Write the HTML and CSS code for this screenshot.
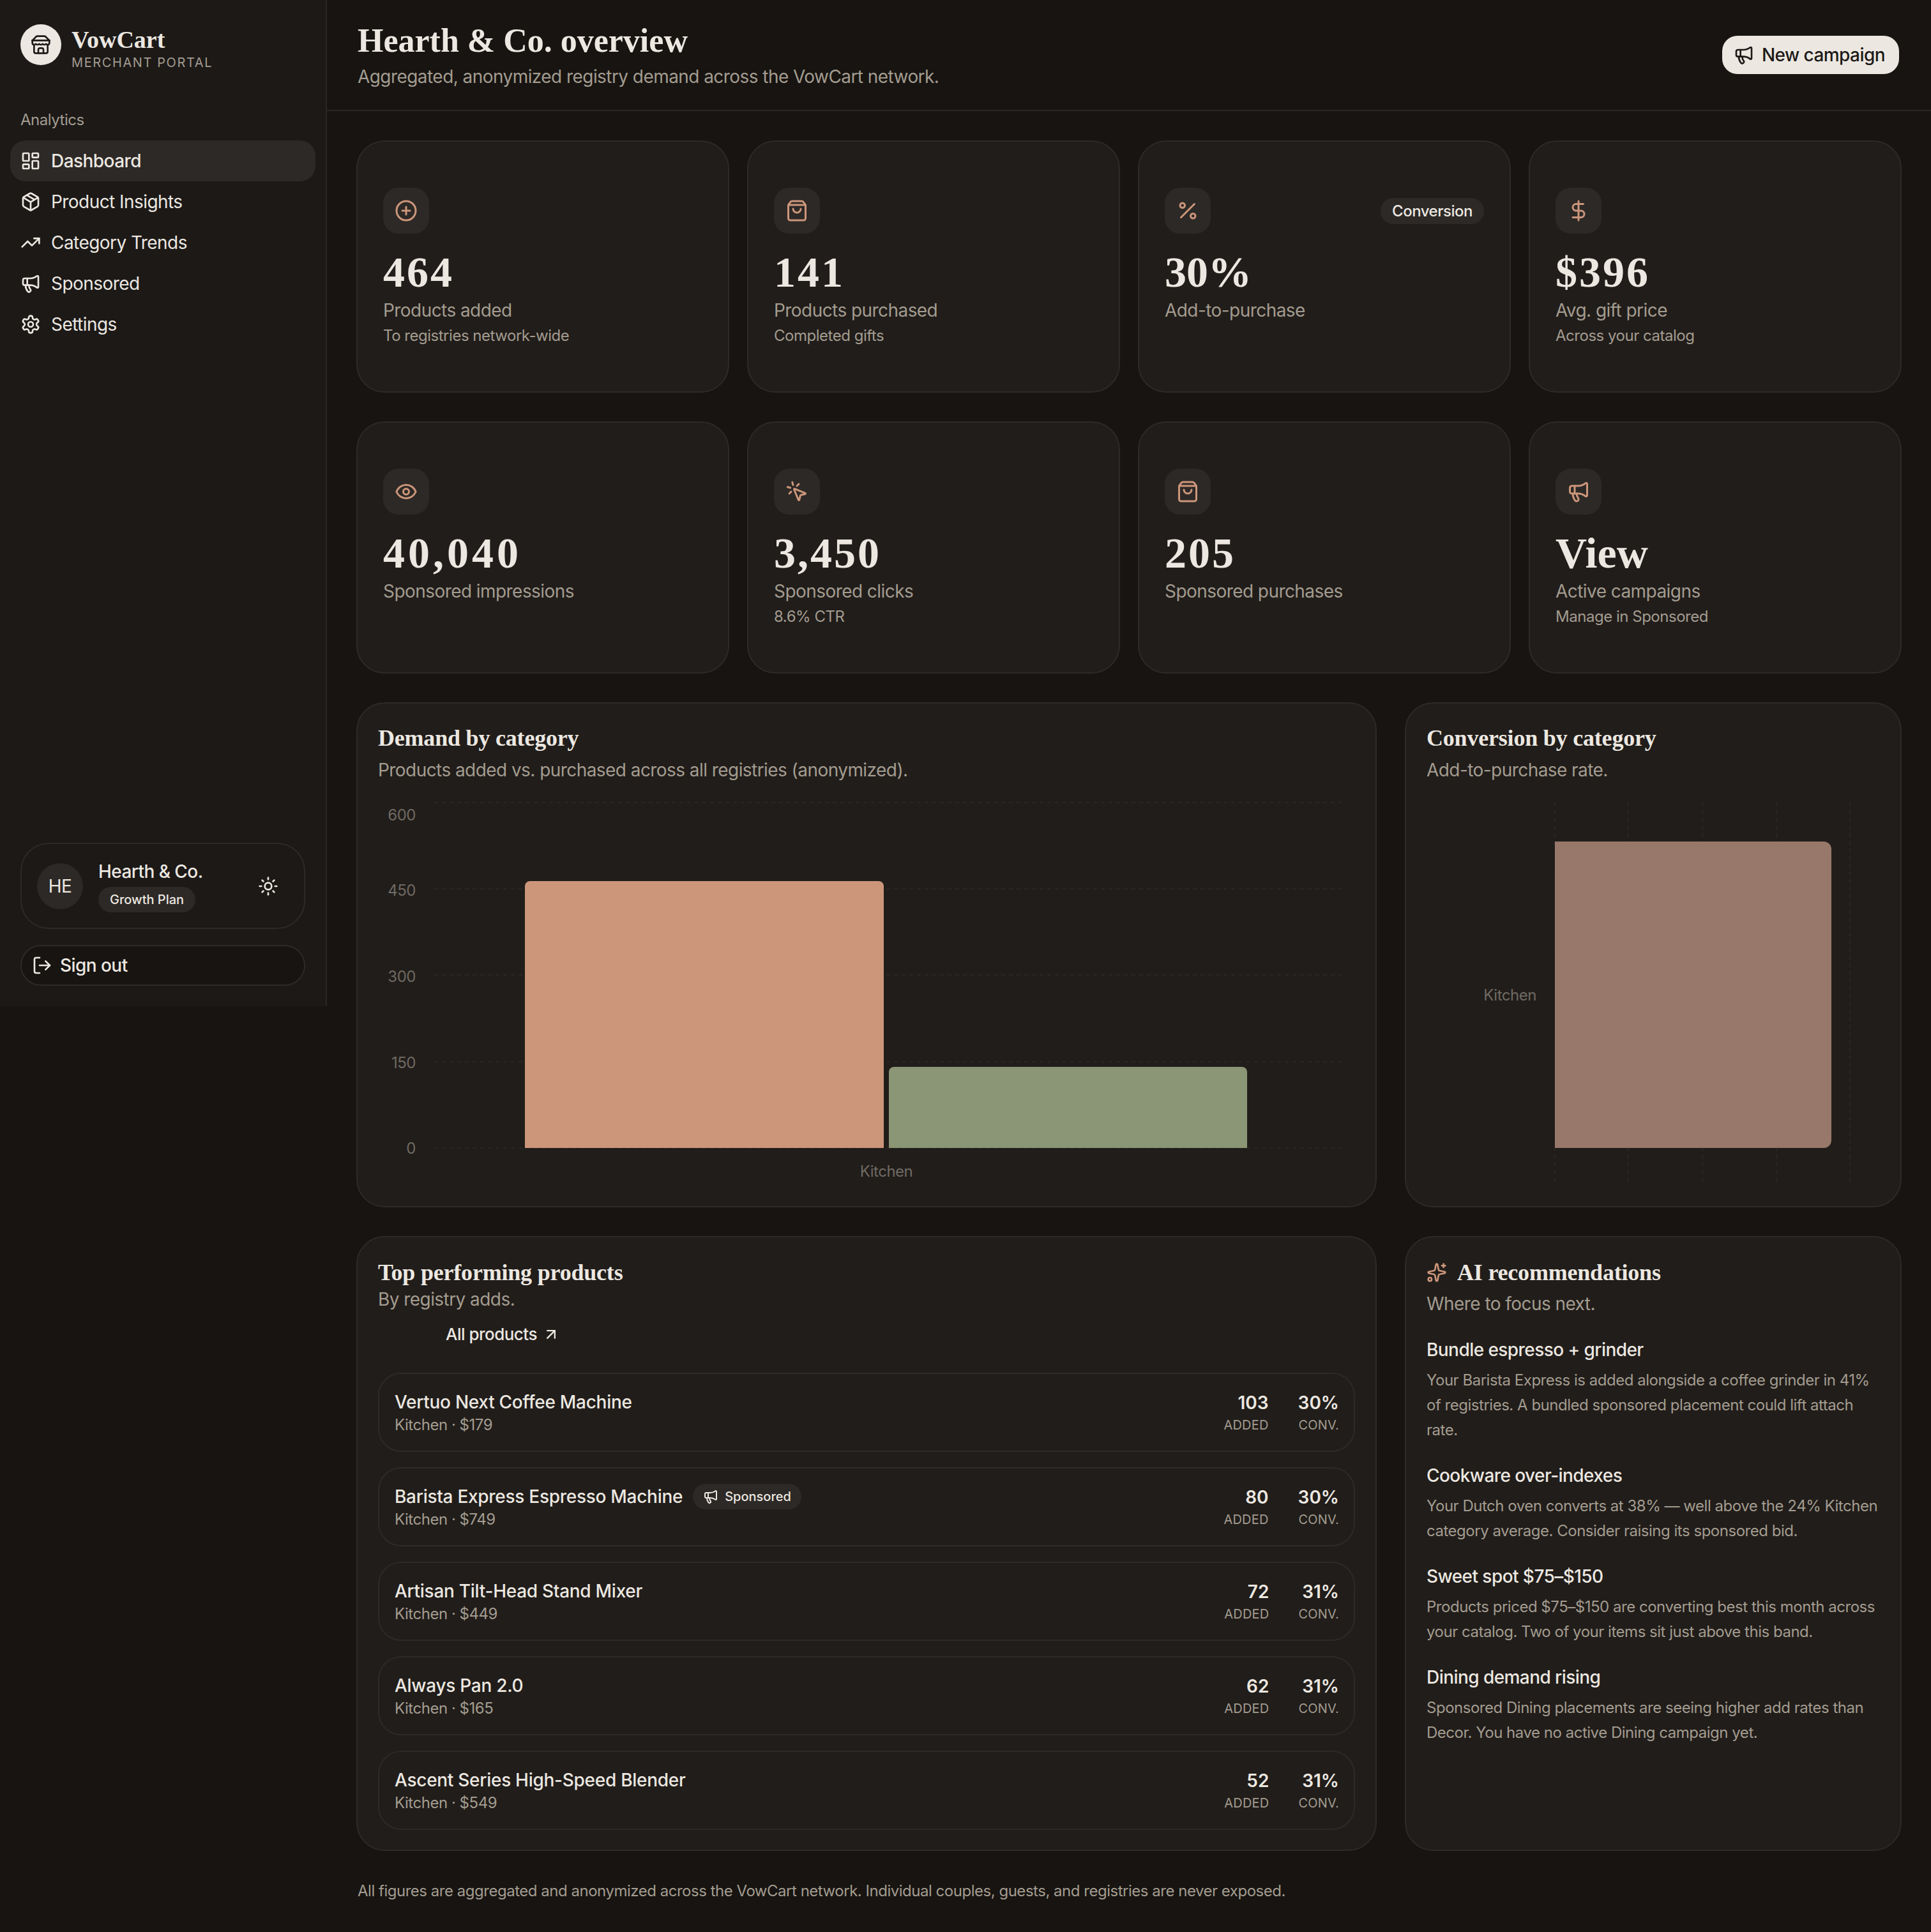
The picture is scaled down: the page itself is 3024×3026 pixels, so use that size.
FILE: index.html
```html
<!DOCTYPE html>
<html lang="en">
<head>
    <meta charset="UTF-8">
    <meta name="viewport" content="width=device-width, initial-scale=1.0">
    <title>VowCart Merchant Portal</title>
    <link rel="stylesheet" href="styles.css">
</head>
<body>
    <svg class="sprite" aria-hidden="true">
        <symbol id="i-store" viewBox="0 0 24 24"><path d="m2 7 4.41-4.41A2 2 0 0 1 7.83 2h8.34a2 2 0 0 1 1.42.59L22 7"/><path d="M4 12v8a2 2 0 0 0 2 2h12a2 2 0 0 0 2-2v-8"/><path d="M15 22v-4a2 2 0 0 0-2-2h-2a2 2 0 0 0-2 2v4"/><path d="M2 7h20"/><path d="M22 7v3a2 2 0 0 1-2 2a2.7 2.7 0 0 1-1.59-.63.7.7 0 0 0-.82 0A2.7 2.7 0 0 1 16 12a2.7 2.7 0 0 1-1.59-.63.7.7 0 0 0-.82 0A2.7 2.7 0 0 1 12 12a2.7 2.7 0 0 1-1.59-.63.7.7 0 0 0-.82 0A2.7 2.7 0 0 1 8 12a2.7 2.7 0 0 1-1.59-.63.7.7 0 0 0-.82 0A2.7 2.7 0 0 1 4 12a2 2 0 0 1-2-2V7"/></symbol>
        <symbol id="i-dashboard" viewBox="0 0 24 24"><rect x="3" y="3" width="7" height="9" rx="1"/><rect x="14" y="3" width="7" height="5" rx="1"/><rect x="14" y="12" width="7" height="9" rx="1"/><rect x="3" y="16" width="7" height="5" rx="1"/></symbol>
        <symbol id="i-package" viewBox="0 0 24 24"><path d="M11 21.73a2 2 0 0 0 2 0l7-4A2 2 0 0 0 21 16V8a2 2 0 0 0-1-1.73l-7-4a2 2 0 0 0-2 0l-7 4A2 2 0 0 0 3 8v8a2 2 0 0 0 1 1.73z"/><path d="M12 22V12"/><path d="m3.3 7 7.703 4.734a2 2 0 0 0 1.994 0L20.7 7"/><path d="m7.5 4.27 9 5.15"/></symbol>
        <symbol id="i-trending" viewBox="0 0 24 24"><path d="M16 7h6v6"/><path d="m22 7-8.5 8.5-5-5L2 17"/></symbol>
        <symbol id="i-megaphone" viewBox="0 0 24 24"><path d="M11 6a13 13 0 0 0 8.4-2.8A1 1 0 0 1 21 4v12a1 1 0 0 1-1.6.8A13 13 0 0 0 11 14H5a2 2 0 0 1-2-2V8a2 2 0 0 1 2-2z"/><path d="M6 14a12 12 0 0 0 2.4 7.2 2 2 0 0 0 3.2-2.4A8 8 0 0 1 10 14"/><path d="M8 6v8"/></symbol>
        <symbol id="i-settings" viewBox="0 0 24 24"><path d="M12.22 2h-.44a2 2 0 0 0-2 2v.18a2 2 0 0 1-1 1.73l-.43.25a2 2 0 0 1-2 0l-.15-.08a2 2 0 0 0-2.73.73l-.22.38a2 2 0 0 0 .73 2.73l.15.1a2 2 0 0 1 1 1.72v.51a2 2 0 0 1-1 1.74l-.15.09a2 2 0 0 0-.73 2.73l.22.38a2 2 0 0 0 2.73.73l.15-.08a2 2 0 0 1 2 0l.43.25a2 2 0 0 1 1 1.73V20a2 2 0 0 0 2 2h.44a2 2 0 0 0 2-2v-.18a2 2 0 0 1 1-1.73l.43-.25a2 2 0 0 1 2 0l.15.08a2 2 0 0 0 2.73-.73l.22-.39a2 2 0 0 0-.73-2.73l-.15-.08a2 2 0 0 1-1-1.74v-.5a2 2 0 0 1 1-1.74l.15-.09a2 2 0 0 0 .73-2.73l-.22-.38a2 2 0 0 0-2.73-.73l-.15.08a2 2 0 0 1-2 0l-.43-.25a2 2 0 0 1-1-1.73V4a2 2 0 0 0-2-2z"/><circle cx="12" cy="12" r="3"/></symbol>
        <symbol id="i-plus" viewBox="0 0 24 24"><circle cx="12" cy="12" r="10"/><path d="M8 12h8"/><path d="M12 8v8"/></symbol>
        <symbol id="i-bag" viewBox="0 0 24 24"><path d="M16 10a4 4 0 0 1-8 0"/><path d="M3.103 6.034h17.794"/><path d="M3.4 5.467a2 2 0 0 0-.4 1.2V20a2 2 0 0 0 2 2h14a2 2 0 0 0 2-2V6.667a2 2 0 0 0-.4-1.2l-2-2.667A2 2 0 0 0 17 2H7a2 2 0 0 0-1.6.8z"/></symbol>
        <symbol id="i-percent" viewBox="0 0 24 24"><path d="M19 5 5 19"/><circle cx="6.5" cy="6.5" r="2.5"/><circle cx="17.5" cy="17.5" r="2.5"/></symbol>
        <symbol id="i-dollar" viewBox="0 0 24 24"><path d="M12 2v20"/><path d="M17 5H9.5a3.5 3.5 0 0 0 0 7h5a3.5 3.5 0 0 1 0 7H6"/></symbol>
        <symbol id="i-eye" viewBox="0 0 24 24"><path d="M2.062 12.348a1 1 0 0 1 0-.696 10.75 10.75 0 0 1 19.876 0 1 1 0 0 1 0 .696 10.75 10.75 0 0 1-19.876 0"/><circle cx="12" cy="12" r="3"/></symbol>
        <symbol id="i-click" viewBox="0 0 24 24"><path d="M14 4.1 12 6"/><path d="m5.1 8-2.9-.8"/><path d="m6 12-1.9 2"/><path d="M7.2 2.2 8 5.1"/><path d="M9.037 9.69a.498.498 0 0 1 .653-.653l11 4.5a.5.5 0 0 1-.074.949l-4.349 1.041a1 1 0 0 0-.74.739l-1.04 4.35a.5.5 0 0 1-.95.074z"/></symbol>
        <symbol id="i-sun" viewBox="0 0 24 24"><circle cx="12" cy="12" r="4"/><path d="M12 2v2"/><path d="M12 20v2"/><path d="m4.93 4.93 1.41 1.41"/><path d="m17.66 17.66 1.41 1.41"/><path d="M2 12h2"/><path d="M20 12h2"/><path d="m6.34 17.66-1.41 1.41"/><path d="m19.07 4.93-1.41 1.41"/></symbol>
        <symbol id="i-logout" viewBox="0 0 24 24"><path d="m16 17 5-5-5-5"/><path d="M21 12H9"/><path d="M9 21H5a2 2 0 0 1-2-2V5a2 2 0 0 1 2-2h4"/></symbol>
        <symbol id="i-arrow" viewBox="0 0 24 24"><path d="M7 7h10v10"/><path d="M7 17 17 7"/></symbol>
        <symbol id="i-sparkles" viewBox="0 0 24 24"><path d="M11.017 2.814a1 1 0 0 1 1.966 0l1.051 5.558a2 2 0 0 0 1.594 1.594l5.558 1.051a1 1 0 0 1 0 1.966l-5.558 1.051a2 2 0 0 0-1.594 1.594l-1.051 5.558a1 1 0 0 1-1.966 0l-1.051-5.558a2 2 0 0 0-1.594-1.594l-5.558-1.051a1 1 0 0 1 0-1.966l5.558-1.051a2 2 0 0 0 1.594-1.594z"/><path d="M20 2v4"/><path d="M22 4h-4"/><circle cx="4" cy="20" r="2"/></symbol>
    </svg>

    <div class="app">
        <aside class="sidebar">
            <div class="brand">
                <div class="brand-logo"><svg class="icon icon-md"><use href="#i-store"/></svg></div>
                <div class="brand-text">
                    <div class="brand-name">VowCart</div>
                    <div class="brand-sub">Merchant Portal</div>
                </div>
            </div>

            <div class="nav-label">Analytics</div>
            <nav class="nav">
                <a class="nav-item active"><svg class="icon icon-md"><use href="#i-dashboard"/></svg>Dashboard</a>
                <a class="nav-item"><svg class="icon icon-md"><use href="#i-package"/></svg>Product Insights</a>
                <a class="nav-item"><svg class="icon icon-md"><use href="#i-trending"/></svg>Category Trends</a>
                <a class="nav-item"><svg class="icon icon-md"><use href="#i-megaphone"/></svg>Sponsored</a>
                <a class="nav-item"><svg class="icon icon-md"><use href="#i-settings"/></svg>Settings</a>
            </nav>

            <div class="user-card">
                <div class="avatar">HE</div>
                <div class="user-info">
                    <div class="user-name">Hearth &amp; Co.</div>
                    <span class="pill pill-plan">Growth Plan</span>
                </div>
                <svg class="icon icon-md user-theme"><use href="#i-sun"/></svg>
            </div>
            <button class="sign-out"><svg class="icon icon-md"><use href="#i-logout"/></svg>Sign out</button>
        </aside>

        <div class="page">
            <header class="topbar">
                <div>
                    <h1>Hearth &amp; Co. overview</h1>
                    <p class="topbar-sub">Aggregated, anonymized registry demand across the VowCart network.</p>
                </div>
                <button class="btn-primary"><svg class="icon icon-md"><use href="#i-megaphone"/></svg>New campaign</button>
            </header>

            <main class="content">
                <section class="stats">
                    <div class="stat">
                        <div class="stat-top"><span class="stat-icon"><svg class="icon icon-lg"><use href="#i-plus"/></svg></span></div>
                        <div class="stat-value">464</div>
                        <div class="stat-label">Products added</div>
                        <div class="stat-sub">To registries network-wide</div>
                    </div>
                    <div class="stat">
                        <div class="stat-top"><span class="stat-icon"><svg class="icon icon-lg"><use href="#i-bag"/></svg></span></div>
                        <div class="stat-value">141</div>
                        <div class="stat-label">Products purchased</div>
                        <div class="stat-sub">Completed gifts</div>
                    </div>
                    <div class="stat">
                        <div class="stat-top">
                            <span class="stat-icon"><svg class="icon icon-lg"><use href="#i-percent"/></svg></span>
                            <span class="pill pill-tag">Conversion</span>
                        </div>
                        <div class="stat-value tight">30%</div>
                        <div class="stat-label">Add-to-purchase</div>
                    </div>
                    <div class="stat">
                        <div class="stat-top"><span class="stat-icon"><svg class="icon icon-lg"><use href="#i-dollar"/></svg></span></div>
                        <div class="stat-value">$396</div>
                        <div class="stat-label">Avg. gift price</div>
                        <div class="stat-sub">Across your catalog</div>
                    </div>
                    <div class="stat">
                        <div class="stat-top"><span class="stat-icon"><svg class="icon icon-lg"><use href="#i-eye"/></svg></span></div>
                        <div class="stat-value wide">40,040</div>
                        <div class="stat-label">Sponsored impressions</div>
                    </div>
                    <div class="stat">
                        <div class="stat-top"><span class="stat-icon"><svg class="icon icon-lg"><use href="#i-click"/></svg></span></div>
                        <div class="stat-value">3,450</div>
                        <div class="stat-label">Sponsored clicks</div>
                        <div class="stat-sub">8.6% CTR</div>
                    </div>
                    <div class="stat">
                        <div class="stat-top"><span class="stat-icon"><svg class="icon icon-lg"><use href="#i-bag"/></svg></span></div>
                        <div class="stat-value">205</div>
                        <div class="stat-label">Sponsored purchases</div>
                    </div>
                    <div class="stat">
                        <div class="stat-top"><span class="stat-icon"><svg class="icon icon-lg"><use href="#i-megaphone"/></svg></span></div>
                        <div class="stat-value tight">View</div>
                        <div class="stat-label">Active campaigns</div>
                        <div class="stat-sub">Manage in Sponsored</div>
                    </div>
                </section>

                <section class="two-col">
                    <div class="card">
                        <h2>Demand by category</h2>
                        <p class="card-sub">Products added vs. purchased across all registries (anonymized).</p>
                        <svg class="chart" width="1530" height="620" viewBox="0 0 1530 620">
                            <g class="grid">
                                <line x1="88" x2="1509" y1="17" y2="17"/>
                                <line x1="88" x2="1509" y1="152" y2="152"/>
                                <line x1="88" x2="1509" y1="287" y2="287"/>
                                <line x1="88" x2="1509" y1="423" y2="423"/>
                                <line x1="88" x2="1509" y1="558" y2="558"/>
                            </g>
                            <g class="ticks" text-anchor="end">
                                <text x="59" y="45">600</text>
                                <text x="59" y="163">450</text>
                                <text x="59" y="298">300</text>
                                <text x="59" y="433">150</text>
                                <text x="59" y="567">0</text>
                            </g>
                            <path class="bar-added" d="M230 558V148a8 8 0 0 1 8-8H784a8 8 0 0 1 8 8V558z"/>
                            <path class="bar-bought" d="M800 558V439a8 8 0 0 1 8-8H1353a8 8 0 0 1 8 8V558z"/>
                            <text class="ticks" x="796" y="603" text-anchor="middle">Kitchen</text>
                        </svg>
                    </div>
                    <div class="card">
                        <h2>Conversion by category</h2>
                        <p class="card-sub">Add-to-purchase rate.</p>
                        <svg class="chart" width="710" height="620" viewBox="-2 0 710 620">
                            <g class="grid">
                                <line x1="199" x2="199" y1="17" y2="613"/>
                                <line x1="314" x2="314" y1="17" y2="613"/>
                                <line x1="430" x2="430" y1="17" y2="613"/>
                                <line x1="546" x2="546" y1="17" y2="613"/>
                                <line x1="661" x2="661" y1="17" y2="613"/>
                            </g>
                            <path class="bar-conv" d="M199 78H620a12 12 0 0 1 12 12V546a12 12 0 0 1-12 12H199z"/>
                            <text class="ticks" x="170" y="327" text-anchor="end">Kitchen</text>
                        </svg>
                    </div>
                </section>

                <section class="two-col">
                    <div class="card card-low">
                        <h2>Top performing products</h2>
                        <p class="card-sub card-sub-tight">By registry adds.</p>
                        <a class="all-link">All products <svg class="icon icon-arrow"><use href="#i-arrow"/></svg></a>
                        <div class="products">
                            <div class="product">
                                <div>
                                    <div class="product-name">Vertuo Next Coffee Machine</div>
                                    <div class="product-meta">Kitchen · $179</div>
                                </div>
                                <div class="product-stats">
                                    <div><div class="num">103</div><div class="unit">Added</div></div>
                                    <div><div class="num">30%</div><div class="unit">Conv.</div></div>
                                </div>
                            </div>
                            <div class="product">
                                <div>
                                    <div class="product-name">Barista Express Espresso Machine <span class="pill pill-sponsored"><svg class="icon icon-sm"><use href="#i-megaphone"/></svg>Sponsored</span></div>
                                    <div class="product-meta">Kitchen · $749</div>
                                </div>
                                <div class="product-stats">
                                    <div><div class="num">80</div><div class="unit">Added</div></div>
                                    <div><div class="num">30%</div><div class="unit">Conv.</div></div>
                                </div>
                            </div>
                            <div class="product">
                                <div>
                                    <div class="product-name">Artisan Tilt-Head Stand Mixer</div>
                                    <div class="product-meta">Kitchen · $449</div>
                                </div>
                                <div class="product-stats">
                                    <div><div class="num">72</div><div class="unit">Added</div></div>
                                    <div><div class="num">31%</div><div class="unit">Conv.</div></div>
                                </div>
                            </div>
                            <div class="product">
                                <div>
                                    <div class="product-name">Always Pan 2.0</div>
                                    <div class="product-meta">Kitchen · $165</div>
                                </div>
                                <div class="product-stats">
                                    <div><div class="num">62</div><div class="unit">Added</div></div>
                                    <div><div class="num">31%</div><div class="unit">Conv.</div></div>
                                </div>
                            </div>
                            <div class="product">
                                <div>
                                    <div class="product-name">Ascent Series High-Speed Blender</div>
                                    <div class="product-meta">Kitchen · $549</div>
                                </div>
                                <div class="product-stats">
                                    <div><div class="num">52</div><div class="unit">Added</div></div>
                                    <div><div class="num">31%</div><div class="unit">Conv.</div></div>
                                </div>
                            </div>
                        </div>
                    </div>
                    <div class="card card-low">
                        <h2 class="ai-title"><svg class="icon icon-md"><use href="#i-sparkles"/></svg>AI recommendations</h2>
                        <p class="card-sub ai-sub">Where to focus next.</p>
                        <div class="recs">
                            <div>
                                <h3>Bundle espresso + grinder</h3>
                                <p>Your Barista Express is added alongside a coffee grinder in 41% of registries. A bundled sponsored placement could lift attach rate.</p>
                            </div>
                            <div>
                                <h3>Cookware over-indexes</h3>
                                <p>Your Dutch oven converts at 38% — well above the 24% Kitchen category average. Consider raising its sponsored bid.</p>
                            </div>
                            <div>
                                <h3>Sweet spot $75–$150</h3>
                                <p>Products priced $75–$150 are converting best this month across your catalog. Two of your items sit just above this band.</p>
                            </div>
                            <div>
                                <h3>Dining demand rising</h3>
                                <p>Sponsored Dining placements are seeing higher add rates than Decor. You have no active Dining campaign yet.</p>
                            </div>
                        </div>
                    </div>
                </section>

                <p class="footnote">All figures are aggregated and anonymized across the VowCart network. Individual couples, guests, and registries are never exposed.</p>
            </main>
        </div>
    </div>
</body>
</html>
```

FILE: styles.css
```css
* {
    box-sizing: border-box;
    letter-spacing: -0.02em;
}

body {
    margin: 0;
    font-family: 'Inter', 'Liberation Sans', sans-serif;
    background: #171411;
    color: #ece8e1;
}

h1, h2, h3, p {
    margin: 0;
}

.sprite {
    display: none;
}

.icon {
    flex: none;
    fill: none;
    stroke: currentColor;
    stroke-width: 2;
    stroke-linecap: round;
    stroke-linejoin: round;
}

.icon-sm { width: 24px; height: 24px; }
.icon-arrow { width: 28px; height: 28px; }
.icon-md { width: 32px; height: 32px; }
.icon-lg { width: 36px; height: 36px; }

.app {
    display: flex;
    align-items: flex-start;
}

/* sidebar */

.sidebar {
    width: 512px;
    height: 1576px;
    flex: none;
    display: flex;
    flex-direction: column;
    padding: 38px 16px 32px;
    background: #1c1917;
    border-right: 2px solid #2b2724;
}

.brand {
    display: flex;
    align-items: flex-start;
    gap: 16px;
    padding-left: 16px;
    height: 74px;
}

.brand-logo {
    width: 64px;
    height: 64px;
    border-radius: 50%;
    display: flex;
    align-items: center;
    justify-content: center;
    background: #ece8e1;
    color: #1c1917;
}

.brand-text {
    margin-top: 2px;
}

.brand-name {
    font-family: 'Liberation Serif', serif;
    font-weight: 700;
    font-size: 38px;
    line-height: 44px;
    letter-spacing: 0;
}

.brand-sub {
    font-size: 20px;
    line-height: 28px;
    letter-spacing: 1.6px;
    text-transform: uppercase;
    color: #a39c90;
}

.nav-label {
    margin: 58px 0 14px 16px;
    font-size: 24px;
    line-height: 36px;
    color: #a39c90;
}

.nav-item {
    height: 64px;
    display: flex;
    align-items: center;
    gap: 16px;
    padding-left: 16px;
    border-radius: 24px;
    font-size: 28px;
    font-weight: 400;
}

.nav-item.active {
    background: #2d2926;
    font-weight: 500;
}

.user-card {
    margin: auto 16px 0;
    height: 135px;
    display: flex;
    align-items: center;
    gap: 24px;
    padding: 0 40px 0 24px;
    border: 2px solid #2e2a27;
    border-radius: 44px;
}

.avatar {
    width: 72px;
    height: 72px;
    flex: none;
    display: flex;
    align-items: center;
    justify-content: center;
    border-radius: 50%;
    background: #2d2926;
    font-size: 28px;
}

.user-name {
    font-size: 28px;
    line-height: 36px;
    font-weight: 500;
    margin-bottom: 6px;
}

.user-theme {
    margin-left: auto;
}

.pill {
    display: inline-flex;
    align-items: center;
    background: #2d2926;
    border-radius: 20px;
    font-weight: 500;
}

.pill-plan {
    height: 40px;
    padding: 0 18px;
    font-size: 20px;
    letter-spacing: 0;
}

.pill-tag {
    height: 41px;
    padding: 0 18px;
    font-size: 24px;
}

.pill-sponsored {
    height: 40px;
    margin-left: 16px;
    padding: 0 16px;
    gap: 10px;
    font-size: 20px;
    letter-spacing: 0;
}

.sign-out {
    margin: 25px 16px 0;
    height: 64px;
    display: flex;
    align-items: center;
    gap: 12px;
    padding: 0 16px;
    background: #171411;
    color: inherit;
    border: 2px solid #2e2a27;
    border-radius: 32px;
    font-family: inherit;
    font-size: 28px;
    font-weight: 500;
}

/* main */

.page {
    flex: 1;
    min-width: 0;
}

.topbar {
    height: 174px;
    display: flex;
    align-items: center;
    justify-content: space-between;
    padding: 0 50px 0 48px;
    border-bottom: 2px solid #2b2724;
}

h1 {
    font-family: 'Liberation Serif', serif;
    font-weight: 700;
    font-size: 52px;
    line-height: 64px;
    letter-spacing: 0;
}

.topbar-sub {
    margin-top: 4px;
    font-size: 28px;
    line-height: 40px;
    color: #a39c90;
}

.btn-primary {
    height: 60px;
    display: flex;
    align-items: center;
    gap: 12px;
    padding: 0 22px 0 18px;
    background: #ece8e1;
    color: #1c1917;
    border: none;
    border-radius: 24px;
    font-family: inherit;
    font-size: 28px;
    font-weight: 500;
}

.content {
    display: flex;
    flex-direction: column;
    gap: 45px;
    padding: 46px;
}

.stats {
    display: grid;
    grid-template-columns: repeat(4, 1fr);
    gap: 45px 28px;
}

.stat {
    height: 395px;
    padding: 72px 40px 0;
    background: #211d1a;
    border: 2px solid #2e2a27;
    border-radius: 44px;
}

.stat-top {
    display: flex;
    align-items: center;
    justify-content: space-between;
}

.stat-icon {
    width: 72px;
    height: 72px;
    display: flex;
    align-items: center;
    justify-content: center;
    background: #2d2926;
    border-radius: 24px;
    color: #cc967b;
}

.stat-value {
    margin-top: 20px;
    font-family: 'Liberation Serif', serif;
    font-weight: 700;
    font-size: 68px;
    line-height: 80px;
    letter-spacing: 3px;
}

.stat-value.tight {
    letter-spacing: 0;
}

.stat-value.wide {
    letter-spacing: 5px;
}

.stat-label {
    font-size: 28px;
    line-height: 40px;
    color: #a39c90;
}

.stat-sub {
    margin-top: 2px;
    font-size: 24px;
    line-height: 36px;
    color: #a39c90;
}

.two-col {
    display: grid;
    grid-template-columns: 1598px 778px;
    gap: 44px;
}

.card {
    padding: 30px 32px 29px;
    background: #211d1a;
    border: 2px solid #2e2a27;
    border-radius: 44px;
}

.card-low {
    padding-top: 31px;
    padding-bottom: 31px;
}

h2 {
    font-family: 'Liberation Serif', serif;
    font-weight: 700;
    font-size: 36px;
    line-height: 48px;
    letter-spacing: -0.2px;
}

.card-sub {
    margin-top: 6px;
    font-size: 28px;
    line-height: 40px;
    color: #a39c90;
}

.card-sub-tight {
    margin-top: -2px;
}

.chart {
    display: block;
    margin-top: 14px;
}

.grid line {
    stroke: #2a2623;
    stroke-width: 2;
    stroke-dasharray: 6 6;
}

.ticks {
    font-size: 24px;
    fill: #6f6a63;
}

.bar-added { fill: #cc967b; }
.bar-bought { fill: #8a9675; }
.bar-conv { fill: #97786a; }

.all-link {
    display: flex;
    align-items: center;
    gap: 8px;
    margin: 15px 0 40px 106px;
    font-size: 26px;
    line-height: 40px;
    font-weight: 500;
}

.products {
    display: flex;
    flex-direction: column;
    gap: 24px;
}

.product {
    height: 124px;
    display: flex;
    align-items: center;
    justify-content: space-between;
    padding: 0 23px 0 24px;
    border: 2px solid #2e2a27;
    border-radius: 36px;
}

.product-name {
    display: flex;
    align-items: center;
    font-size: 28px;
    line-height: 40px;
    font-weight: 500;
    letter-spacing: -0.01em;
}

.product-meta {
    font-size: 24px;
    line-height: 32px;
    color: #a39c90;
}

.product-stats {
    display: flex;
    gap: 46px;
    text-align: right;
}

.num {
    font-size: 28px;
    line-height: 40px;
    font-weight: 600;
    letter-spacing: 0;
}

.unit {
    font-size: 20px;
    line-height: 30px;
    letter-spacing: 0.2px;
    text-transform: uppercase;
    color: #a39c90;
}

.ai-title {
    display: flex;
    align-items: center;
    gap: 16px;
}

.ai-title .icon {
    color: #cc967b;
}

.ai-sub {
    margin-top: 5px;
}

.recs {
    display: flex;
    flex-direction: column;
    gap: 32px;
    margin-top: 32px;
}

h3 {
    font-size: 28px;
    line-height: 40px;
    font-weight: 500;
}

.recs p {
    margin-top: 8px;
    font-size: 24px;
    line-height: 39px;
    color: #a39c90;
}

.footnote {
    padding-left: 2px;
    font-size: 24px;
    line-height: 36px;
    color: #a39c90;
}
```
